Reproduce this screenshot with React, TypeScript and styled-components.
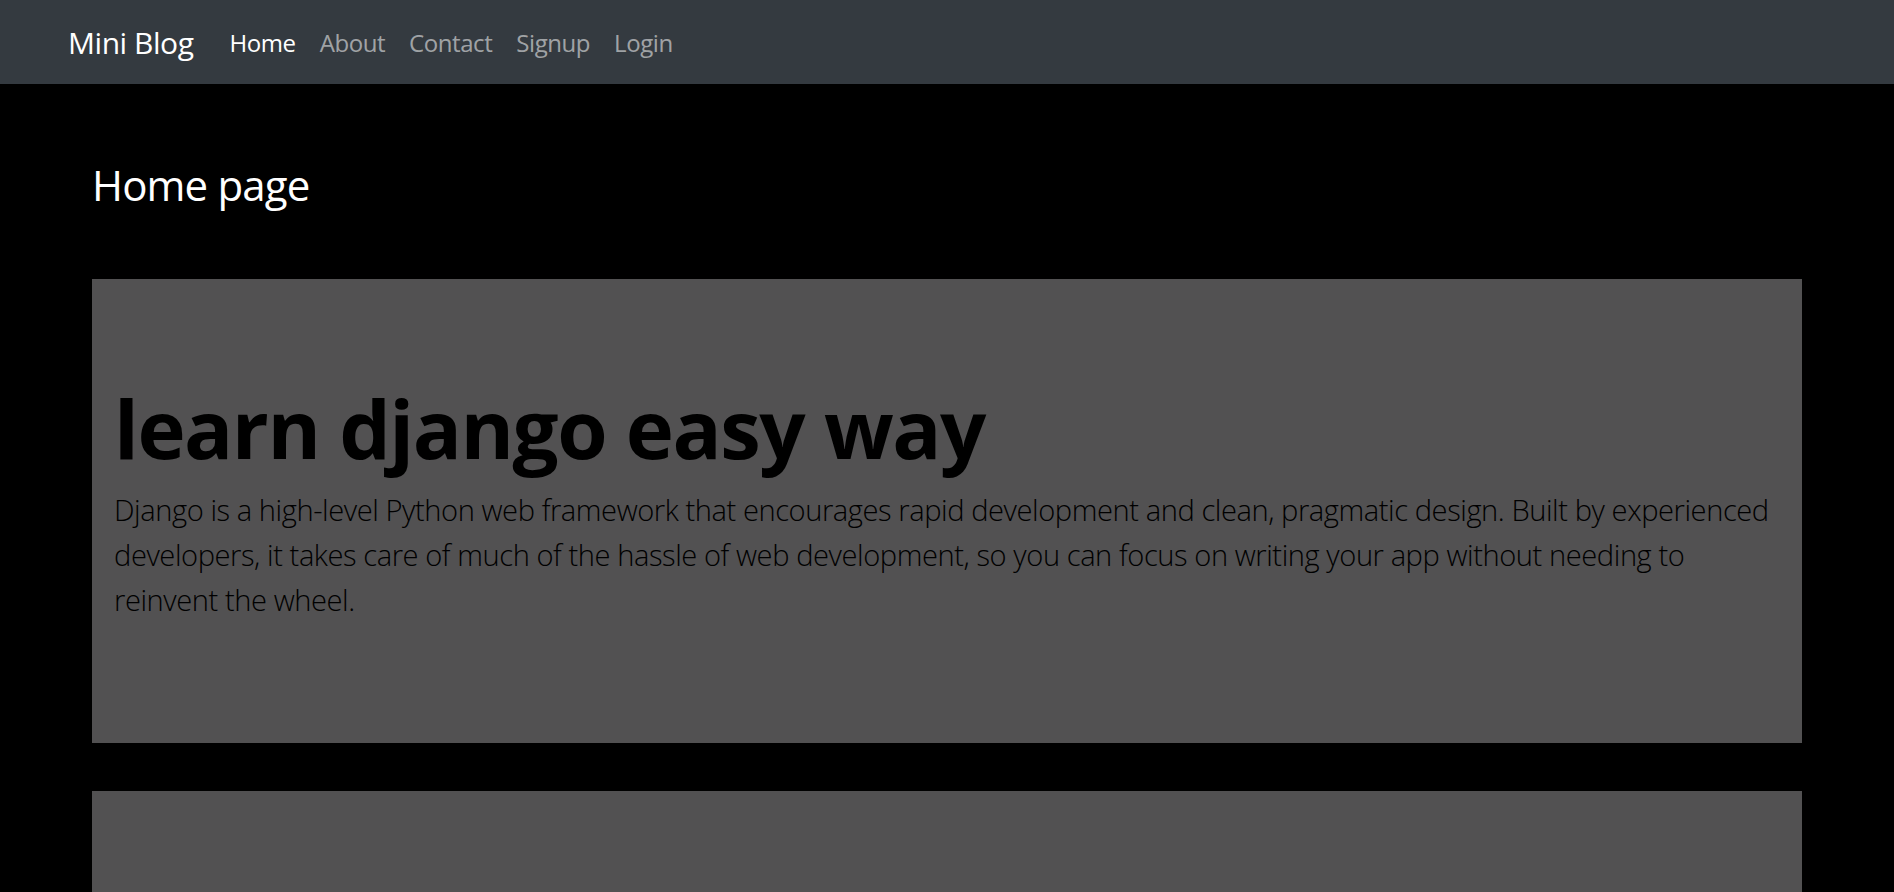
import React from 'react';
import styled, { createGlobalStyle } from 'styled-components';

const GlobalStyle = createGlobalStyle`
  *, *::before, *::after { box-sizing: border-box; }
  body {
    margin: 0;
    background: #000;
    color: #fff;
    font-family: "Open Sans", "Noto Sans", sans-serif;
  }
`;

const Navbar = styled.nav`
  height: 84px;
  background-color: #343a40;
  display: flex;
  align-items: center;
  padding: 0 68px;
`;

const Brand = styled.a`
  font-size: 30px;
  line-height: 45px;
  letter-spacing: -0.015em;
  color: #fff;
  text-decoration: none;
  margin-right: 24px;
`;

const NavList = styled.ul`
  display: flex;
  list-style: none;
  margin: 0;
  padding: 0;
`;

const NavLink = styled.a<{ $active?: boolean }>`
  display: block;
  padding: 13px 12px 11px;
  font-size: 24px;
  line-height: 36px;
  letter-spacing: -0.018em;
  color: ${({ $active }) => ($active ? '#fff' : 'rgba(255, 255, 255, 0.55)')};
  text-decoration: none;
`;

const Main = styled.main`
  max-width: 1710px;
  margin: 0 auto;
  padding-top: 76px;
`;

const PageTitle = styled.h2`
  margin: 0 0 70px;
  font-size: 42px;
  font-weight: 400;
  line-height: 1.17;
  letter-spacing: -0.02em;
`;

const Post = styled.section`
  background-color: #525152;
  padding: 100px 22px 96px;
  margin-bottom: 48px;
  color: #000;
`;

const PostTitle = styled.h1`
  margin: 0 0 11px;
  font-size: 81.5px;
  font-weight: 700;
  line-height: 1.2;
  letter-spacing: -0.018em;
`;

const PostBody = styled.p`
  margin: 0 0 24px;
  font-size: 29.1px;
  font-weight: 300;
  line-height: 45px;
  letter-spacing: -0.015em;
`;

const links = ['Home', 'About', 'Contact', 'Signup', 'Login'];

const posts = [
  {
    id: 1,
    title: 'learn django easy way',
    body:
      'Django is a high-level Python web framework that encourages rapid development and clean, pragmatic design. Built by experienced developers, it takes care of much of the hassle of web development, so you can focus on writing your app without needing to reinvent the wheel.',
  },
  {
    id: 2,
    title: 'learn python easy way',
    body:
      'Python is a programming language that lets you work quickly and integrate systems more effectively.',
  },
];

const App: React.FC = () => {
  return (
    <>
      <GlobalStyle />
      <Navbar>
        <Brand href="#">Mini Blog</Brand>
        <NavList>
          {links.map((l) => (
            <li key={l}>
              <NavLink href="#" $active={l === 'Home'}>
                {l}
              </NavLink>
            </li>
          ))}
        </NavList>
      </Navbar>

      <Main>
        <PageTitle>Home page</PageTitle>
        {posts.map((post) => (
          <Post key={post.id}>
            <PostTitle>{post.title}</PostTitle>
            <PostBody>{post.body}</PostBody>
          </Post>
        ))}
      </Main>
    </>
  );
};

export default App;
